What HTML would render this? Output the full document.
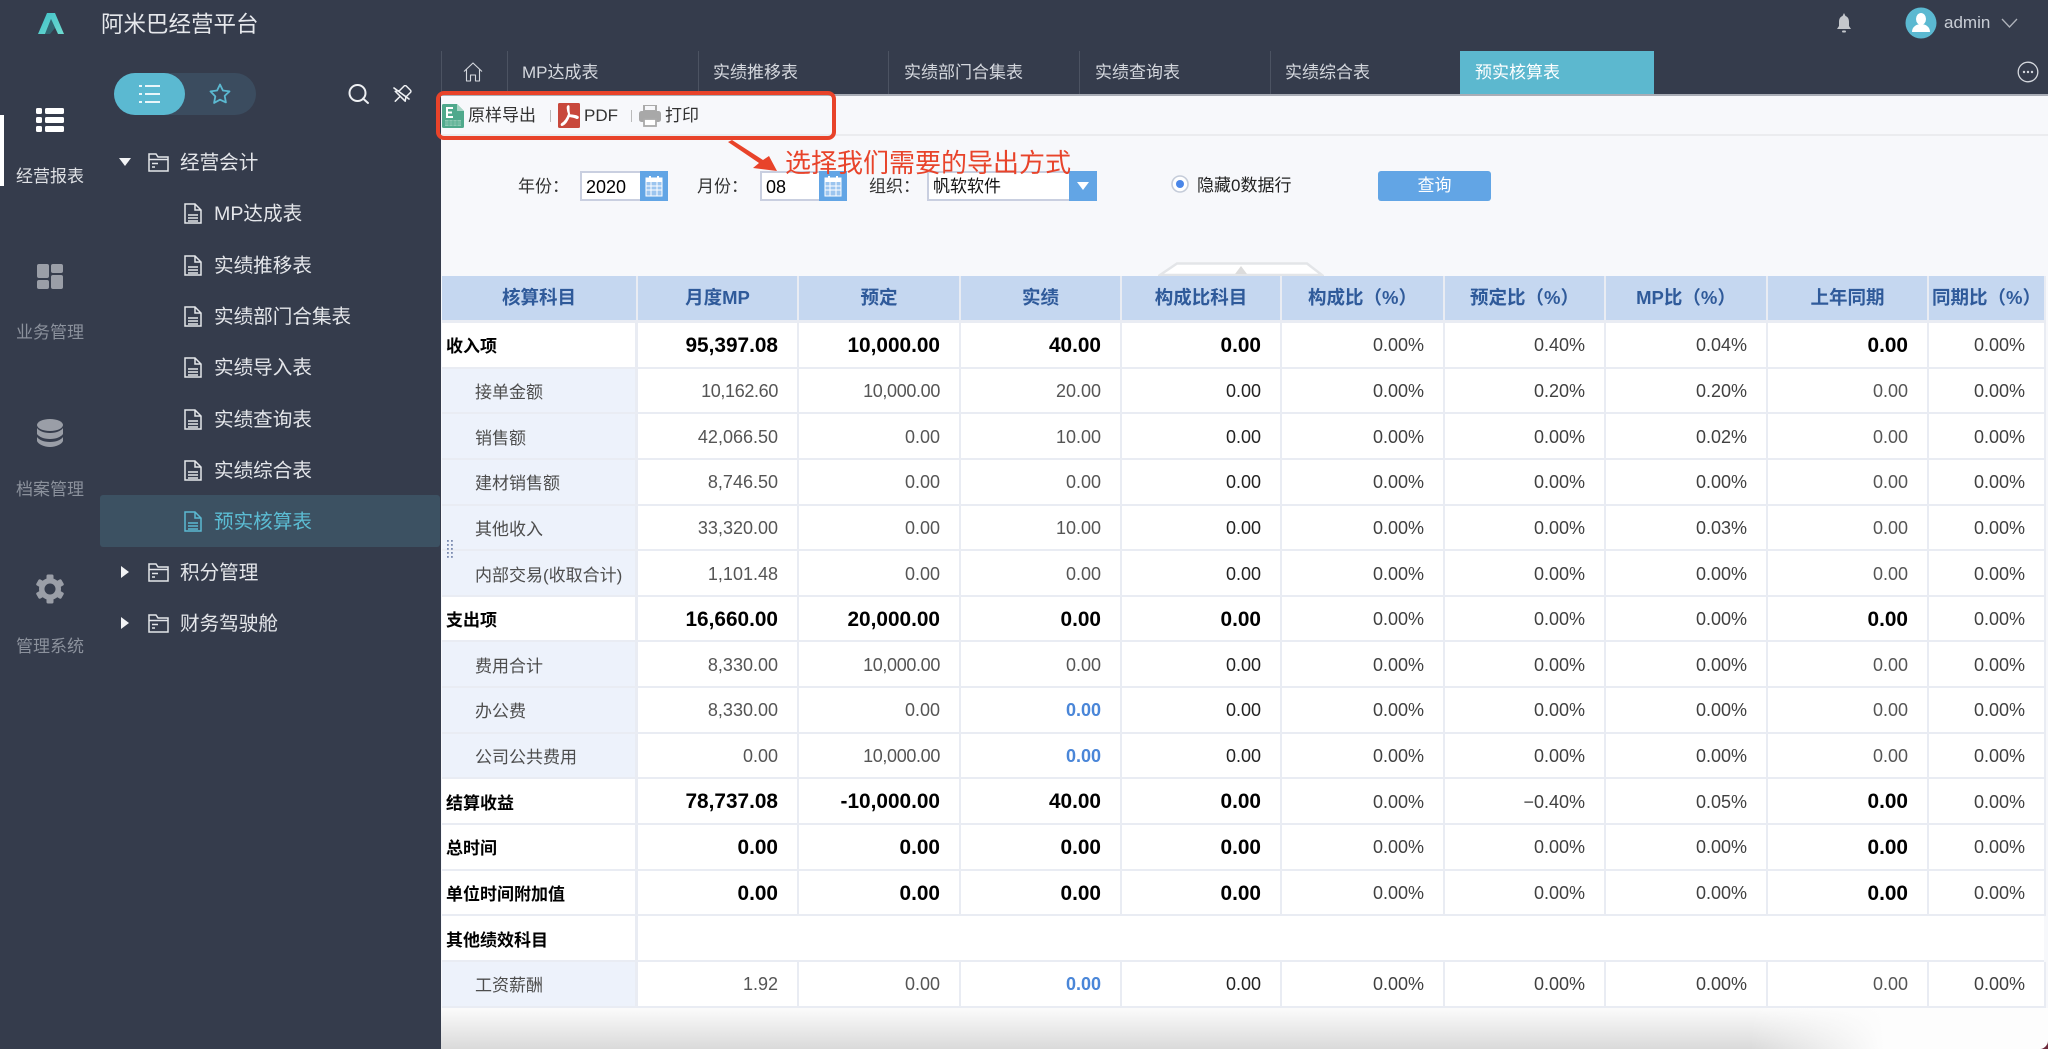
<!DOCTYPE html>
<html lang="zh"><head><meta charset="utf-8"><title>阿米巴经营平台</title>
<style>
*{box-sizing:border-box}
html,body{margin:0;padding:0;width:2048px;height:1049px;overflow:hidden;background:#353c4c;font-family:"Liberation Sans","Noto Sans CJK SC",sans-serif}
.a{position:absolute;white-space:nowrap}
.nav{left:0;width:100px;text-align:center;font-size:17px;line-height:24px;color:#8b919c}
.m{font-size:19.6px;line-height:30px;color:#e4e6ea}
.tab{font-size:17px;line-height:24px;top:61px;color:#d5d8de}
.div{top:51px;width:1px;height:43px;background:#4c5362}
.lbl{font-size:17px;line-height:24px;color:#333;top:175px}
.g{position:absolute;left:442px;top:276px;width:1604px;display:grid;grid-template-columns:196px 161px 162px 161px 160px 163px 161px 162px 161px 117px;grid-template-rows:47px repeat(15,45.65px)}
.g>div{background:#fff;border-right:2px solid #e9ecf3;border-bottom:2px solid #e9ecf3;text-align:right;padding:2px 19px 0 0;font-size:18px;color:#555;white-space:nowrap;display:flex;align-items:center;justify-content:flex-end}
.g>div.h{background:#c5d7f0;border-bottom:3px solid #e9ecf3;color:#2f5a9a;font-size:18.5px;font-weight:bold;justify-content:center;padding:0 0 2px;border-right-color:#e9ecf3}
.g>div.f{justify-content:flex-start;background:#edf2fb;padding:0 0 0 33px;font-size:17px;color:#4d4d4d;border-right-width:3px}
.g>div.b{justify-content:flex-start;background:#fff;padding:0 0 0 4px;font-size:17px;font-weight:bold;color:#000;border-right-width:3px}
.g>div.n{font-size:20.8px;font-weight:bold;color:#000}
.g>div.d{color:#222}
.g>div.p{color:#404040}
.g>div.l{color:#4a86d8;font-weight:bold}
.g>div.t{letter-spacing:-.35px}
.g>div.e{grid-column:span 9;border-right:0;margin-right:2px}
</style></head><body>

<!-- main content background -->
<div class="a" style="left:441px;top:94px;width:1607px;height:955px;background:#f7f8fb;border-top:2px solid #a9adb6"></div>
<div class="a" style="left:441px;top:134px;width:1607px;height:2px;background:#ebecef"></div>
<div class="a" style="left:441px;top:1008px;width:1607px;height:41px;background:linear-gradient(#fbfbfb,#dadada)"></div>
<div class="a" style="left:1750px;top:1008px;width:298px;height:41px;background:linear-gradient(90deg,rgba(251,251,251,0),#fdfdfd 45%)"></div>

<!-- logo & title -->
<svg class="a" style="left:36px;top:11px" width="30" height="24" viewBox="0 0 30 24"><defs><linearGradient id="lg" x1="0" x2="1" y1="0" y2="1"><stop offset="0" stop-color="#3fc0c8"/><stop offset="1" stop-color="#6fdcd0"/></linearGradient></defs><path d="M2 23L11 2h8l9 21h-6L15 8 9 23z" fill="url(#lg)"/><path d="M9 23l6-15 4 9-5 6z" fill="#2d8a92" opacity=".55"/></svg>
<div class="a" style="left:101px;top:9px;font-size:22.5px;line-height:32px;color:#e6e8ec">阿米巴经营平台</div>

<!-- left nav -->
<div class="a" style="left:0;top:115px;width:4px;height:71px;background:#fff"></div>
<svg class="a" style="left:36px;top:108px" width="28" height="24" viewBox="0 0 28 24" fill="#fff"><rect x="0" y="0" width="6" height="6" rx="1.5"/><rect x="0" y="9" width="6" height="6" rx="1.5"/><rect x="0" y="18" width="6" height="6" rx="1.5"/><rect x="9" y="0" width="19" height="6" rx="1.5"/><rect x="9" y="9" width="19" height="6" rx="1.5"/><rect x="9" y="18" width="19" height="6" rx="1.5"/></svg>
<div class="a nav" style="top:165px;color:#dfe1e5">经营报表</div>
<svg class="a" style="left:37px;top:264px" width="26" height="25" viewBox="0 0 26 25" fill="#9a9ea7"><rect x="0" y="0" width="12" height="14" rx="2"/><rect x="14" y="0" width="12" height="9" rx="2"/><rect x="0" y="16" width="12" height="9" rx="2"/><rect x="14" y="11" width="12" height="14" rx="2"/></svg>
<div class="a nav" style="top:321px">业务管理</div>
<svg class="a" style="left:37px;top:419px" width="26" height="28" viewBox="0 0 26 28" fill="#9a9ea7"><ellipse cx="13" cy="6" rx="13" ry="6"/><path d="M0 9c2 3 7 5 13 5s11-2 13-5v6c-2 3-7 5-13 5S2 18 0 15z"/><path d="M0 18c2 3 7 5 13 5s11-2 13-5v4c-1 3-7 6-13 6S1 25 0 22z"/></svg>
<div class="a nav" style="top:478px">档案管理</div>
<svg class="a" style="left:35px;top:574px" width="30" height="30" viewBox="0 0 30 30"><g fill="#9a9ea7"><circle cx="15" cy="15" r="11"/><rect x="11.5" y="0.5" width="7" height="6" rx="1.5"/><rect x="11.5" y="23.500" width="7" height="6" rx="1.5"/><rect x="11.500" y="0.500" width="7" height="6" rx="1.5" transform="rotate(60 15 15)"/><rect x="11.500" y="0.500" width="7" height="6" rx="1.5" transform="rotate(120 15 15)"/><rect x="11.500" y="0.500" width="7" height="6" rx="1.5" transform="rotate(240 15 15)"/><rect x="11.500" y="0.500" width="7" height="6" rx="1.5" transform="rotate(300 15 15)"/></g><circle cx="15" cy="15" r="5.500" fill="#353c4c"/></svg>
<div class="a nav" style="top:635px">管理系统</div>

<!-- toggle -->
<div class="a" style="left:114px;top:73px;width:142px;height:42px;border-radius:21px;background:#3b4c5f"></div>
<div class="a" style="left:114px;top:73px;width:71px;height:42px;border-radius:21px;background:#5bb9d1"></div>
<svg class="a" style="left:139px;top:84px" width="21" height="20" viewBox="0 0 21 20" fill="#e9f6fa"><rect x="0" y="1" width="3" height="2"/><rect x="0" y="9" width="3" height="2"/><rect x="0" y="17" width="3" height="2"/><rect x="6" y="1" width="15" height="2"/><rect x="6" y="9" width="15" height="2"/><rect x="6" y="17" width="15" height="2"/></svg>
<svg class="a" style="left:209px;top:83px" width="22" height="21" viewBox="0 0 22 21"><path d="M11 1.500l2.900 6 6.600.9-4.800 4.500 1.200 6.500L11 16.700l-5.900 3.200 1.200-6.500L1.500 8.400l6.600-.9z" fill="none" stroke="#5bb9d1" stroke-width="1.800" stroke-linejoin="round"/></svg>
<svg class="a" style="left:348px;top:83px" width="22" height="22" viewBox="0 0 22 22" fill="none" stroke="#eef0f3" stroke-width="2"><circle cx="9.500" cy="10" r="8"/><path d="M15 15.500L20 20" stroke-linecap="round"/></svg>
<svg class="a" style="left:392px;top:85px" width="20" height="19" viewBox="0 0 20 19" fill="none" stroke="#eef0f3" stroke-width="1.500" stroke-linejoin="round" stroke-linecap="round"><g transform="rotate(45 10 9.500)"><path d="M7 0.500h6a1.500 1.500 0 0 1 1.500 1.500v6.500L17 12H3l2.500-3.500V2A1.500 1.500 0 0 1 7 .5zM10 12v7"/></g><path d="M2 3l15 11" stroke-width="1.700"/></svg>

<!-- tree -->
<svg class="a" style="left:119px;top:158px" width="12" height="8"><path d="M0 0h12L6 8z" fill="#f2f3f5"/></svg>
<svg class="a" style="left:148px;top:153px" width="21" height="19" viewBox="0 0 21 19" fill="none" stroke="#e4e6ea" stroke-width="1.500"><path d="M1 18V1h7l2 3h10v14zM1 6.500h19M4 10.500h6M4 14h3"/></svg>
<div class="a m" style="left:180px;top:148px">经营会计</div>

<svg class="a" style="left:184px;top:203px" width="18" height="21" viewBox="0 0 18 21" fill="none" stroke="#e4e6ea" stroke-width="1.500"><path d="M1 1h10l6 6v13H1zM11 1v6h6M4 12h10M4 15h10M4 18h10"/></svg>
<div class="a m" style="left:214px;top:199px">MP达成表</div>
<svg class="a" style="left:184px;top:255px" width="18" height="21" viewBox="0 0 18 21" fill="none" stroke="#e4e6ea" stroke-width="1.500"><path d="M1 1h10l6 6v13H1zM11 1v6h6M4 12h10M4 15h10M4 18h10"/></svg>
<div class="a m" style="left:214px;top:251px">实绩推移表</div>
<svg class="a" style="left:184px;top:306px" width="18" height="21" viewBox="0 0 18 21" fill="none" stroke="#e4e6ea" stroke-width="1.500"><path d="M1 1h10l6 6v13H1zM11 1v6h6M4 12h10M4 15h10M4 18h10"/></svg>
<div class="a m" style="left:214px;top:302px">实绩部门合集表</div>
<svg class="a" style="left:184px;top:357px" width="18" height="21" viewBox="0 0 18 21" fill="none" stroke="#e4e6ea" stroke-width="1.500"><path d="M1 1h10l6 6v13H1zM11 1v6h6M4 12h10M4 15h10M4 18h10"/></svg>
<div class="a m" style="left:214px;top:353px">实绩导入表</div>
<svg class="a" style="left:184px;top:409px" width="18" height="21" viewBox="0 0 18 21" fill="none" stroke="#e4e6ea" stroke-width="1.500"><path d="M1 1h10l6 6v13H1zM11 1v6h6M4 12h10M4 15h10M4 18h10"/></svg>
<div class="a m" style="left:214px;top:405px">实绩查询表</div>
<svg class="a" style="left:184px;top:460px" width="18" height="21" viewBox="0 0 18 21" fill="none" stroke="#e4e6ea" stroke-width="1.500"><path d="M1 1h10l6 6v13H1zM11 1v6h6M4 12h10M4 15h10M4 18h10"/></svg>
<div class="a m" style="left:214px;top:456px">实绩综合表</div>

<div class="a" style="left:100px;top:495px;width:340px;height:52px;background:#3c5162;border-radius:3px"></div>
<svg class="a" style="left:184px;top:511px" width="18" height="21" viewBox="0 0 18 21" fill="none" stroke="#5bb9d1" stroke-width="1.500"><path d="M1 1h10l6 6v13H1zM11 1v6h6M4 12h10M4 15h10M4 18h10"/></svg>
<div class="a m" style="left:214px;top:507px;color:#5bbcd3">预实核算表</div>

<svg class="a" style="left:121px;top:566px" width="8" height="12"><path d="M0 0l8 6-8 6z" fill="#f2f3f5"/></svg>
<svg class="a" style="left:148px;top:563px" width="21" height="19" viewBox="0 0 21 19" fill="none" stroke="#e4e6ea" stroke-width="1.500"><path d="M1 18V1h7l2 3h10v14zM1 6.500h19M4 10.500h6M4 14h3"/></svg>
<div class="a m" style="left:180px;top:558px">积分管理</div>
<svg class="a" style="left:121px;top:617px" width="8" height="12"><path d="M0 0l8 6-8 6z" fill="#f2f3f5"/></svg>
<svg class="a" style="left:148px;top:614px" width="21" height="19" viewBox="0 0 21 19" fill="none" stroke="#e4e6ea" stroke-width="1.500"><path d="M1 18V1h7l2 3h10v14zM1 6.500h19M4 10.500h6M4 14h3"/></svg>
<div class="a m" style="left:180px;top:609px">财务驾驶舱</div>

<!-- top right -->
<svg class="a" style="left:1836px;top:13px" width="16" height="20" viewBox="0 0 16 20" fill="#c4c7cc"><path d="M8 0l1.500 3C12 4 13 6 13 9v4l2 3H1l2-3V9c0-3 1-5 3.500-6z"/><rect x="6" y="17.500" width="4" height="2" rx="1"/></svg>
<svg class="a" style="left:1905px;top:7px" width="32" height="32" viewBox="0 0 32 32"><circle cx="16" cy="16" r="15.500" fill="#5bb9d1"/><ellipse cx="16" cy="12" rx="5" ry="6" fill="#fff"/><path d="M7 25c0-5 4-7 6-7.500h6c2 .5 6 2.500 6 7.500z" fill="#fff"/></svg>
<div class="a" style="left:1944px;top:11px;font-size:17px;line-height:24px;color:#c9ced6">admin</div>
<svg class="a" style="left:2001px;top:18px" width="17" height="10" viewBox="0 0 17 10"><path d="M1 1l7.500 8L16 1" fill="none" stroke="#aeb2ba" stroke-width="1.300"/></svg>

<!-- tabs -->
<div class="a div" style="left:441px"></div>
<div class="a div" style="left:507px"></div>
<div class="a div" style="left:698px"></div>
<div class="a div" style="left:888px"></div>
<div class="a div" style="left:1079px"></div>
<div class="a div" style="left:1270px"></div>
<svg class="a" style="left:463px;top:62px" width="20" height="20" viewBox="0 0 20 20" fill="none" stroke="#d5d8de" stroke-width="1.100" stroke-linejoin="round"><path d="M1 9.500L10 1l9 8.500M3.500 7.500V19h4v-6h5v6h4V7.500"/></svg>
<div class="a tab" style="left:522px">MP达成表</div>
<div class="a tab" style="left:713px">实绩推移表</div>
<div class="a tab" style="left:904px">实绩部门合集表</div>
<div class="a tab" style="left:1095px">实绩查询表</div>
<div class="a tab" style="left:1285px">实绩综合表</div>
<div class="a" style="left:1460px;top:51px;width:194px;height:43px;background:#5cb8cf"></div>
<div class="a tab" style="left:1475px;color:#fff">预实核算表</div>
<svg class="a" style="left:2017px;top:61px" width="22" height="22" viewBox="0 0 22 22"><circle cx="11" cy="11" r="9.800" fill="none" stroke="#d5d8de" stroke-width="1.300"/><circle cx="7" cy="11" r="1.200" fill="#d5d8de"/><circle cx="11" cy="11" r="1.200" fill="#d5d8de"/><circle cx="15" cy="11" r="1.200" fill="#d5d8de"/></svg>

<!-- toolbar -->
<svg class="a" style="left:442px;top:104px" width="22" height="24" viewBox="0 0 22 24"><path d="M1.500 0H15l7 7v15.500a1.500 1.500 0 0 1-1.500 1.500h-19A1.500 1.500 0 0 1 0 22.500v-21A1.500 1.500 0 0 1 1.500 0z" fill="#4fa98c"/><path d="M15 0l7 7h-7z" fill="#a9d6c6"/><path d="M4 3h7v2H6v2.500h4v2H6V12h5v2H4z" fill="#fff"/><path d="M3 16h16v6H3z" fill="#8cc8b3"/><path d="M3 18h16M3 20h16M7 16v6M11 16v6M15 16v6" stroke="#4fa98c" stroke-width=".7"/></svg>
<div class="a" style="left:468px;top:104px;font-size:17px;line-height:24px;color:#333">原样导出</div>
<div class="a" style="left:550px;top:110px;width:1px;height:12px;background:#bbb"></div>
<svg class="a" style="left:558px;top:103px" width="22" height="25" viewBox="0 0 22 25"><rect width="22" height="25" rx="1.500" fill="#c8483c"/><path d="M10.500 3c-1.500 0-1 4 .5 8-1.500 4-4 8-6.500 9.500-1.500 1-1 2 0 1.500 3-1.500 5-5 6.500-9 3 .5 5.500 1 7.500 2 1.500.5 2-1 .5-1.500-2.500-1-5.500-1-7.500-1.500-1.500-4-.5-9-1-9z" fill="none" stroke="#fff" stroke-width="1.800"/></svg>
<div class="a" style="left:584px;top:104px;font-size:17px;line-height:24px;color:#333">PDF</div>
<div class="a" style="left:631px;top:110px;width:1px;height:12px;background:#bbb"></div>
<svg class="a" style="left:639px;top:105px" width="22" height="22" viewBox="0 0 22 22"><path d="M5 0h12v6H5z" fill="none" stroke="#aaa" stroke-width="2"/><rect x="0" y="6" width="22" height="11" rx="2.500" fill="#a8a8a8"/><rect x="5" y="14" width="12" height="7" fill="#fff" stroke="#aaa" stroke-width="1.800"/></svg>
<div class="a" style="left:665px;top:104px;font-size:17px;line-height:24px;color:#333">打印</div>

<!-- filter -->
<div class="a lbl" style="left:518px">年份：</div>
<div class="a" style="left:580px;top:171px;width:88px;height:30px;background:#fff;border:2px solid #c9cfe0;font-size:18px;line-height:28px;color:#000;padding-left:4px;border-right:0">2020</div>
<div class="a" style="left:640px;top:171px;width:28px;height:30px;background:#62a5e5"></div>
<svg class="a" style="left:645px;top:175px" width="18" height="22" viewBox="0 0 18 22"><path d="M1 3h16v18H1z" fill="#9cc5ef" stroke="#fff"/><rect x="1" y="3" width="16" height="4" fill="#fff"/><path d="M5 1v4M13 1v4" stroke="#fff" stroke-width="2"/><path d="M1 11h16M1 15h16M6 7v14M12 7v14" stroke="#fff"/></svg>
<div class="a lbl" style="left:697px">月份：</div>
<div class="a" style="left:760px;top:171px;width:87px;height:30px;background:#fff;border:2px solid #c9cfe0;font-size:18px;line-height:28px;color:#000;padding-left:4px;border-right:0">08</div>
<div class="a" style="left:819px;top:171px;width:28px;height:30px;background:#62a5e5"></div>
<svg class="a" style="left:824px;top:175px" width="18" height="22" viewBox="0 0 18 22"><path d="M1 3h16v18H1z" fill="#9cc5ef" stroke="#fff"/><rect x="1" y="3" width="16" height="4" fill="#fff"/><path d="M5 1v4M13 1v4" stroke="#fff" stroke-width="2"/><path d="M1 11h16M1 15h16M6 7v14M12 7v14" stroke="#fff"/></svg>
<div class="a lbl" style="left:869px">组织：</div>
<div class="a" style="left:927px;top:171px;width:170px;height:30px;background:#fff;border:2px solid #c9cfe0;font-size:17px;line-height:28px;color:#111;padding-left:4px;border-right:0">帆软软件</div>
<div class="a" style="left:1069px;top:171px;width:28px;height:30px;background:#62a5e5"></div>
<svg class="a" style="left:1077px;top:182px" width="12" height="8"><path d="M0 0h12L6 8z" fill="#fff"/></svg>
<svg class="a" style="left:1171px;top:175px" width="18" height="18" viewBox="0 0 18 18"><circle cx="9" cy="9" r="8" fill="#fff" stroke="#c5ccd9" stroke-width="1.600"/><circle cx="9" cy="9" r="4" fill="#4a86e8"/></svg>
<div class="a" style="left:1197px;top:174px;font-size:17px;line-height:24px;color:#222">隐藏0数据行</div>
<div class="a" style="left:1378px;top:171px;width:113px;height:30px;background:#62a5e5;border-radius:3px;color:#fff;font-size:17px;line-height:30px;text-align:center">查询</div>

<!-- collapse handle -->
<svg class="a" style="left:1158px;top:261px" width="166" height="16" viewBox="0 0 166 16"><path d="M2 14L19 2.500h130L164 14z" fill="#fff" stroke="#e3e5e8" stroke-width="2.500"/><path d="M83 5l6 8H77z" fill="#dcdcdc"/></svg>

<!-- table -->
<div class="g">
<div class="h">核算科目</div><div class="h">月度MP</div><div class="h">预定</div><div class="h">实绩</div><div class="h">构成比科目</div><div class="h">构成比（%）</div><div class="h">预定比（%）</div><div class="h">MP比（%）</div><div class="h">上年同期</div><div class="h">同期比（%）</div>

<div class="b">收入项</div><div class="n">95,397.08</div><div class="n">10,000.00</div><div class="n">40.00</div><div class="n">0.00</div><div class="p">0.00%</div><div class="p">0.40%</div><div class="p">0.04%</div><div class="n">0.00</div><div class="p">0.00%</div>
<div class="f">接单金额</div><div class="t">10,162.60</div><div class="t">10,000.00</div><div>20.00</div><div class="d">0.00</div><div class="p">0.00%</div><div class="p">0.20%</div><div class="p">0.20%</div><div>0.00</div><div class="p">0.00%</div>
<div class="f">销售额</div><div>42,066.50</div><div>0.00</div><div>10.00</div><div class="d">0.00</div><div class="p">0.00%</div><div class="p">0.00%</div><div class="p">0.02%</div><div>0.00</div><div class="p">0.00%</div>
<div class="f">建材销售额</div><div>8,746.50</div><div>0.00</div><div>0.00</div><div class="d">0.00</div><div class="p">0.00%</div><div class="p">0.00%</div><div class="p">0.00%</div><div>0.00</div><div class="p">0.00%</div>
<div class="f">其他收入</div><div>33,320.00</div><div>0.00</div><div>10.00</div><div class="d">0.00</div><div class="p">0.00%</div><div class="p">0.00%</div><div class="p">0.03%</div><div>0.00</div><div class="p">0.00%</div>
<div class="f">内部交易(收取合计)</div><div>1,101.48</div><div>0.00</div><div>0.00</div><div class="d">0.00</div><div class="p">0.00%</div><div class="p">0.00%</div><div class="p">0.00%</div><div>0.00</div><div class="p">0.00%</div>
<div class="b">支出项</div><div class="n">16,660.00</div><div class="n">20,000.00</div><div class="n">0.00</div><div class="n">0.00</div><div class="p">0.00%</div><div class="p">0.00%</div><div class="p">0.00%</div><div class="n">0.00</div><div class="p">0.00%</div>
<div class="f">费用合计</div><div>8,330.00</div><div class="t">10,000.00</div><div>0.00</div><div class="d">0.00</div><div class="p">0.00%</div><div class="p">0.00%</div><div class="p">0.00%</div><div>0.00</div><div class="p">0.00%</div>
<div class="f">办公费</div><div>8,330.00</div><div>0.00</div><div class="l">0.00</div><div class="d">0.00</div><div class="p">0.00%</div><div class="p">0.00%</div><div class="p">0.00%</div><div>0.00</div><div class="p">0.00%</div>
<div class="f">公司公共费用</div><div>0.00</div><div class="t">10,000.00</div><div class="l">0.00</div><div class="d">0.00</div><div class="p">0.00%</div><div class="p">0.00%</div><div class="p">0.00%</div><div>0.00</div><div class="p">0.00%</div>
<div class="b">结算收益</div><div class="n">78,737.08</div><div class="n">-10,000.00</div><div class="n">40.00</div><div class="n">0.00</div><div class="p">0.00%</div><div class="p">−0.40%</div><div class="p">0.05%</div><div class="n">0.00</div><div class="p">0.00%</div>
<div class="b">总时间</div><div class="n">0.00</div><div class="n">0.00</div><div class="n">0.00</div><div class="n">0.00</div><div class="p">0.00%</div><div class="p">0.00%</div><div class="p">0.00%</div><div class="n">0.00</div><div class="p">0.00%</div>
<div class="b">单位时间附加值</div><div class="n">0.00</div><div class="n">0.00</div><div class="n">0.00</div><div class="n">0.00</div><div class="p">0.00%</div><div class="p">0.00%</div><div class="p">0.00%</div><div class="n">0.00</div><div class="p">0.00%</div>
<div class="b">其他绩效科目</div><div class="e"></div>
<div class="f">工资薪酬</div><div>1.92</div><div>0.00</div><div class="l">0.00</div><div class="d">0.00</div><div class="p">0.00%</div><div class="p">0.00%</div><div class="p">0.00%</div><div>0.00</div><div class="p">0.00%</div>
</div>

<!-- drag handle dots -->
<svg class="a" style="left:446px;top:540px" width="8" height="18" viewBox="0 0 8 18" fill="#7b8bb0"><rect x="1" y="0" width="1.800" height="1.800"/><rect x="5" y="0" width="1.800" height="1.800"/><rect x="1" y="4" width="1.800" height="1.800"/><rect x="5" y="4" width="1.800" height="1.800"/><rect x="1" y="8" width="1.800" height="1.800"/><rect x="5" y="8" width="1.800" height="1.800"/><rect x="1" y="12" width="1.800" height="1.800"/><rect x="5" y="12" width="1.800" height="1.800"/><rect x="1" y="16" width="1.800" height="1.800"/><rect x="5" y="16" width="1.800" height="1.800"/></svg>

<!-- annotation -->
<div class="a" style="left:436px;top:91px;width:400px;height:49px;border:4px solid #e8432a;border-radius:8px"></div>
<svg class="a" style="left:725px;top:138px" width="60" height="36" viewBox="0 0 60 36"><path d="M3 4L7 2l31 20 6-4 8 15-24-3 6-5z" fill="#e8432a"/></svg>
<div class="a" style="left:785px;top:146px;font-size:26px;line-height:34px;color:#e8432a">选择我们需要的导出方式</div>

<svg class="a" style="left:2040px;top:1041px" width="8" height="8"><path d="M8 0v8H0C4 8 8 4 8 0z" fill="#6d2a3c"/></svg>
</body></html>
